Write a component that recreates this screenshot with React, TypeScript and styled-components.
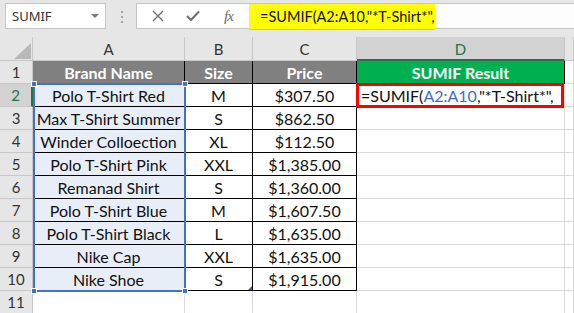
import React from "react";
import styled, { createGlobalStyle } from "styled-components";

const GlobalStyle = createGlobalStyle`
  html, body { margin: 0; padding: 0; background: #ffffff; overflow: hidden; }
  * { box-sizing: border-box; }
`;

const CELL_FONT = `"Lato", "Liberation Sans", sans-serif`;
const UI_FONT = `"Noto Sans", "Open Sans", sans-serif`;
const COLS = "33px 152px 68px 104px 208px 1fr";

const Page = styled.div`
  width: 574px;
  height: 313px;
  overflow: hidden;
  background: #ffffff;
`;

const Toolbar = styled.div`
  height: 37px;
  background: #e6e6e6;
  display: flex;
  align-items: flex-start;
  padding-top: 3px;
`;

const NameBox = styled.div`
  margin-left: 5px;
  width: 101px;
  height: 26px;
  background: #ffffff;
  border: 1px solid #c6c6c6;
  display: flex;
  align-items: center;
  justify-content: space-between;
  padding: 0 6px 0 6px;
  font-family: ${UI_FONT};
  font-size: 13px;
  color: #333333;
`;

const Caret = styled.span`
  width: 0;
  height: 0;
  border-left: 4px solid transparent;
  border-right: 4px solid transparent;
  border-top: 4px solid #7a7a7a;
`;

const Dots = styled.div`
  width: 2px;
  margin: 8px 13px 0 15px;
  display: flex;
  flex-direction: column;
  gap: 3px;
  & > span {
    width: 2px;
    height: 2px;
    background: #a6a6a6;
  }
`;

const FxBox = styled.div`
  width: 110px;
  height: 26px;
  background: #ffffff;
  border: 1px solid #c6c6c6;
  display: flex;
  align-items: center;
  padding-left: 15px;
  gap: 22px;
`;

const FxText = styled.span`
  font-family: "Liberation Serif", serif;
  font-style: italic;
  font-size: 15px;
  color: #6b6b6b;
  margin-left: 2px;
  letter-spacing: -1px;
`;

const FormulaInput = styled.div`
  flex: 1;
  height: 26px;
  background: #fdfdfd;
  border-top: 1px solid #c6c6c6;
  border-bottom: 1px solid #c6c6c6;
  margin-left: -1px;
  display: flex;
  padding-left: 4px;
`;

const Highlight = styled.div`
  width: 186px;
  height: 26px;
  background: #ffff00;
  border-bottom: 1px solid #d9d900;
  font-family: ${CELL_FONT};
  font-size: 14.5px;
  color: #111111;
  display: flex;
  align-items: center;
  padding-left: 11px;
  white-space: nowrap;
`;

const Sheet = styled.div`
  position: relative;
`;

const Row = styled.div<{ $h: number }>`
  display: grid;
  grid-template-columns: ${COLS};
  height: ${(p) => p.$h}px;
`;

const Corner = styled.div`
  background: #e6e6e6;
  border-right: 1px solid #c8c8c8;
  border-bottom: 1px solid #c8c8c8;
  display: flex;
  align-items: flex-end;
  justify-content: flex-end;
  padding: 0 1px 1px 0;
`;

const ColHead = styled.div<{ $sel?: boolean }>`
  background: ${(p) => (p.$sel ? "#d2d2d2" : "#e6e6e6")};
  color: ${(p) => (p.$sel ? "#217346" : "#333333")};
  border-right: 1px solid #c8c8c8;
  border-bottom: ${(p) => (p.$sel ? "2px solid #217346" : "1px solid #c8c8c8")};
  display: flex;
  align-items: center;
  justify-content: center;
  font-family: ${CELL_FONT};
  font-size: 15px;
  padding-top: 1px;
`;

const RowHead = styled.div<{ $sel?: boolean }>`
  background: ${(p) => (p.$sel ? "#d2d2d2" : "#e6e6e6")};
  color: ${(p) => (p.$sel ? "#217346" : "#333333")};
  border-right: ${(p) => (p.$sel ? "2px solid #217346" : "1px solid #c8c8c8")};
  border-bottom: 1px solid #c8c8c8;
  display: flex;
  align-items: center;
  justify-content: center;
  font-family: ${CELL_FONT};
  font-size: 15px;
`;

type Tone = "plain" | "head" | "green" | "sel";

const toneBg: Record<Tone, string> = {
  plain: "#ffffff",
  head: "#808080",
  green: "#00b050",
  sel: "#e8eef8",
};

const Cell = styled.div<{ $tone?: Tone; $boxed?: boolean; $left?: boolean }>`
  background: ${(p) => toneBg[p.$tone || "plain"]};
  color: ${(p) => (p.$tone === "head" || p.$tone === "green" ? "#ffffff" : "#111111")};
  font-weight: ${(p) => (p.$tone === "head" || p.$tone === "green" ? 700 : 400)};
  border-right: 1px solid ${(p) => (p.$boxed ? "#000000" : "#dadada")};
  border-bottom: 1px solid ${(p) => (p.$boxed ? "#000000" : "#dadada")};
  display: flex;
  align-items: center;
  justify-content: ${(p) => (p.$left ? "flex-start" : "center")};
  padding-left: ${(p) => (p.$left ? "4px" : "0")};
  font-family: ${CELL_FONT};
  font-size: 16px;
  white-space: nowrap;
  overflow: visible;
  position: relative;
  z-index: ${(p) => (p.$left ? 3 : "auto")};
`;

const Ref = styled.span`
  color: #3c6fc5;
`;

const Selection = styled.div`
  position: absolute;
  left: 33px;
  top: 46px;
  width: 153px;
  height: 209px;
  border: 2px solid #3f72c8;
  pointer-events: none;
  z-index: 2;
`;

const Handle = styled.span<{ $x: "l" | "r"; $y: "t" | "b" }>`
  position: absolute;
  width: 6px;
  height: 6px;
  background: #3f72c8;
  border: 1px solid #ffffff;
  ${(p) => (p.$x === "l" ? "left: -4px;" : "right: -4px;")}
  ${(p) => (p.$y === "t" ? "top: -4px;" : "bottom: -4px;")}
`;

const RedBox = styled.div`
  position: absolute;
  left: 356px;
  top: 46px;
  width: 208px;
  height: 25px;
  border: 3px solid #ff0000;
  pointer-events: none;
  z-index: 4;
`;

const RefCorner = styled.span`
  position: absolute;
  left: 248px;
  top: 249px;
  width: 0;
  height: 0;
  border-left: 4px solid transparent;
  border-bottom: 4px solid #3f5f9f;
  z-index: 2;
`;

type Rec = [string, string, string];
const data: Rec[] = [
  ["Polo T-Shirt Red", "M", "$307.50"],
  ["Max T-Shirt Summer", "S", "$862.50"],
  ["Winder Colloection", "XL", "$112.50"],
  ["Polo T-Shirt Pink", "XXL", "$1,385.00"],
  ["Remanad Shirt", "S", "$1,360.00"],
  ["Polo T-Shirt Blue", "M", "$1,607.50"],
  ["Polo T-Shirt Black", "L", "$1,635.00"],
  ["Nike Cap", "XXL", "$1,635.00"],
  ["Nike Shoe", "S", "$1,915.00"],
];

const XIcon = () => (
  <svg width="12" height="12" viewBox="0 0 12 12">
    <path d="M1 1 L11 11 M11 1 L1 11" stroke="#707070" strokeWidth="1.4" fill="none" />
  </svg>
);

const CheckIcon = () => (
  <svg width="14" height="12" viewBox="0 0 14 12">
    <path d="M1 6 L5 10 L13 1.5" stroke="#707070" strokeWidth="2" fill="none" />
  </svg>
);

const CornerTri = () => (
  <svg width="17" height="16" viewBox="0 0 17 16">
    <path d="M17 0 L17 16 L0 16 Z" fill="#b9b9b9" />
  </svg>
);

export default function App() {
  return (
    <Page>
      <GlobalStyle />
      <Toolbar>
        <NameBox>
          <span>SUMIF</span>
          <Caret />
        </NameBox>
        <Dots>
          <span />
          <span />
          <span />
        </Dots>
        <FxBox>
          <XIcon />
          <CheckIcon />
          <FxText>fx</FxText>
        </FxBox>
        <FormulaInput>
          <Highlight>=SUMIF(A2:A10,"*T-Shirt*",</Highlight>
        </FormulaInput>
      </Toolbar>
      <Sheet>
        <Row $h={24}>
          <Corner>
            <CornerTri />
          </Corner>
          <ColHead>A</ColHead>
          <ColHead>B</ColHead>
          <ColHead>C</ColHead>
          <ColHead $sel>D</ColHead>
          <ColHead />
        </Row>
        <Row $h={23}>
          <RowHead>1</RowHead>
          <Cell $tone="head" $boxed>Brand Name</Cell>
          <Cell $tone="head" $boxed>Size</Cell>
          <Cell $tone="head" $boxed>Price</Cell>
          <Cell $tone="green" $boxed>SUMIF Result</Cell>
          <Cell />
        </Row>
        {data.map((r, i) => (
          <Row $h={23} key={i}>
            <RowHead $sel={i === 0}>{i + 2}</RowHead>
            <Cell $tone="sel" $boxed>{r[0]}</Cell>
            <Cell $boxed>{r[1]}</Cell>
            <Cell $boxed>{r[2]}</Cell>
            {i === 0 ? (
              <Cell $left>
                =SUMIF(<Ref>A2:A10</Ref>,"*T-Shirt*",
              </Cell>
            ) : (
              <Cell />
            )}
            <Cell />
          </Row>
        ))}
        <Row $h={23}>
          <RowHead>11</RowHead>
          <Cell />
          <Cell />
          <Cell />
          <Cell />
          <Cell />
        </Row>
        <Selection>
          <Handle $x="l" $y="t" />
          <Handle $x="r" $y="t" />
          <Handle $x="l" $y="b" />
          <Handle $x="r" $y="b" />
        </Selection>
        <RedBox />
        <RefCorner />
      </Sheet>
    </Page>
  );
}
